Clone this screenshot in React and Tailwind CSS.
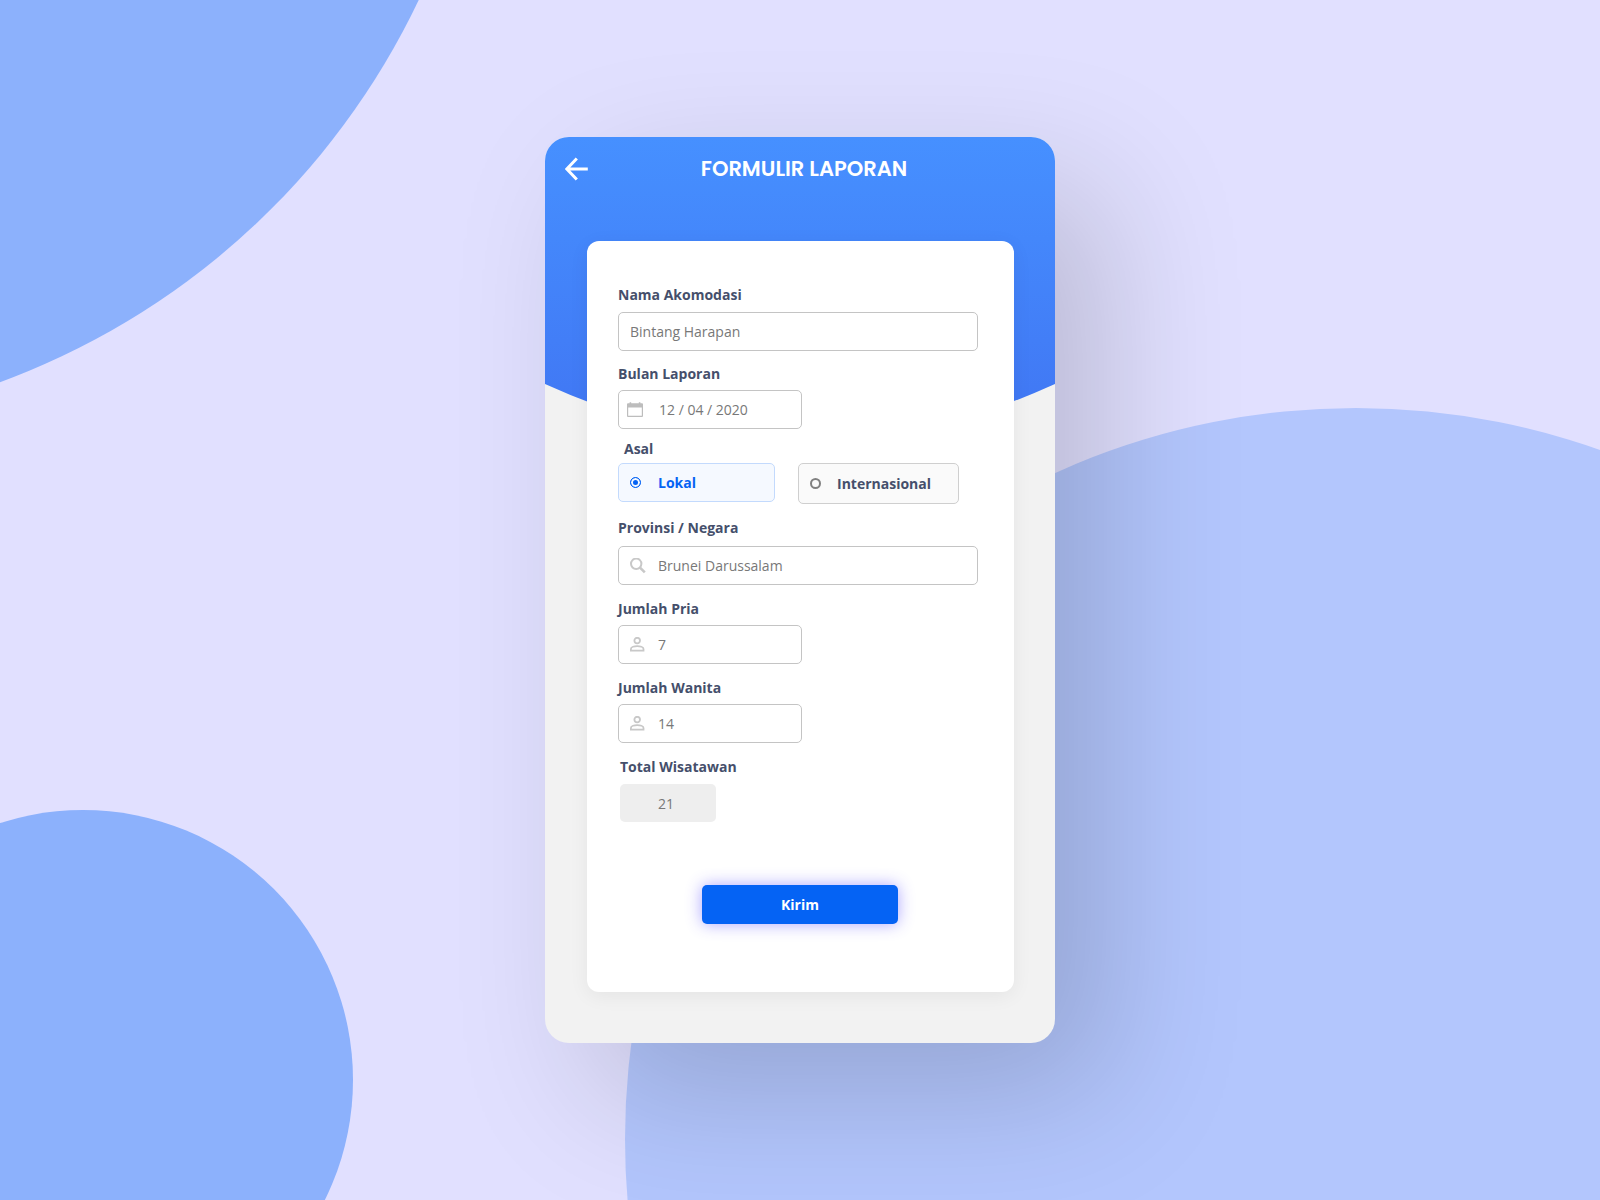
import React, { useState } from 'react'

const FIELD = 'h-[39px] rounded-[5px] border border-[#c4c4c4] flex items-center bg-white'
const INPUT = 'min-w-0 flex-1 bg-transparent text-sm leading-5 text-[#787878] outline-none'
const LABEL = 'block w-fit text-sm leading-5 font-bold text-[#454f6b]'

function Backdrop() {
  return (
    <svg
      className="absolute inset-0 h-full w-full"
      viewBox="0 0 1600 1200"
      preserveAspectRatio="xMidYMid slice"
      aria-hidden="true"
    >
      <circle cx="-258" cy="-321" r="749" fill="#8cb1fc" />
      <circle cx="83" cy="1080" r="270" fill="#8cb1fc" />
      <circle cx="1356" cy="1139" r="731" fill="#b3c6fd" />
    </svg>
  )
}

function HeaderShape() {
  return (
    <svg
      className="absolute inset-x-0 top-0 h-[302px] w-full"
      viewBox="0 0 510 302"
      preserveAspectRatio="none"
      aria-hidden="true"
    >
      <defs>
        <linearGradient id="header" x1="0" y1="0" x2="0" y2="1">
          <stop offset="0" stopColor="#4690ff" />
          <stop offset="1" stopColor="#4075f3" />
        </linearGradient>
      </defs>
      <path d="M0 0H510V247Q255 363 0 247Z" fill="url(#header)" />
    </svg>
  )
}

function BackIcon() {
  return (
    <svg className="h-6 w-6" viewBox="0 0 24 24" fill="none" stroke="#fff" strokeWidth="3">
      <path d="M11.8 1.5L1.8 12L11.8 22.5M1.8 12H22.8" />
    </svg>
  )
}

function CalendarIcon() {
  return (
    <svg className="h-4 w-4 shrink-0" viewBox="0 0 16 16" aria-hidden="true">
      <path
        d="M0 2.2Q0 1.2 1 1.2H2.6V0.2H4.2V1.2H11.8V0.2H13.4V1.2H15Q16 1.2 16 2.2V14Q16 15 15 15H1Q0 15 0 14ZM1.2 5.4V13.8H14.8V5.4Z"
        fillRule="evenodd"
        fill="#bdbdbd"
      />
    </svg>
  )
}

function SearchIcon() {
  return (
    <svg className="h-4 w-4 shrink-0" viewBox="0 0 16 16" fill="none" stroke="#c8c8c8" aria-hidden="true">
      <circle cx="6.2" cy="5.8" r="5.2" strokeWidth="2" />
      <path d="M10 9.6L14.8 14.4" strokeWidth="2.6" />
    </svg>
  )
}

function PersonIcon() {
  return (
    <svg className="h-4 w-4 shrink-0" viewBox="0 0 16 16" fill="none" stroke="#c8c8c8" strokeWidth="1.8" aria-hidden="true">
      <circle cx="7.2" cy="3.6" r="2.8" />
      <path d="M0.9 13.6V12C0.9 10.2 4.4 9.2 7.2 9.2S13.5 10.2 13.5 12V13.6Z" />
    </svg>
  )
}

function OriginOption({ value, label, checked, onChange, className }) {
  return (
    <label className={`flex items-center rounded-[5px] border pl-[11px] text-sm leading-5 font-bold ${className}`}>
      <input
        type="radio"
        name="asal"
        value={value}
        checked={checked}
        onChange={onChange}
        className={`h-[11px] w-[11px] shrink-0 appearance-none rounded-full ${
          checked
            ? 'border border-[#0563f4] bg-[#0563f4] shadow-[inset_0_0_0_2px_#f5f9ff]'
            : 'border-2 border-[#808080] bg-transparent'
        }`}
      />
      {label}
    </label>
  )
}

export default function App() {
  const [origin, setOrigin] = useState('lokal')
  const [men, setMen] = useState('7')
  const [women, setWomen] = useState('14')
  const total = Number(men) + Number(women)

  return (
    <div className="relative flex min-h-screen items-start justify-center overflow-hidden bg-[#e1e0ff] px-4 pt-[137px] pb-[157px] font-['Open_Sans',sans-serif]">
      <Backdrop />

      <main className="relative w-full max-w-[510px] rounded-3xl bg-[#f2f2f2] shadow-[50px_50px_140px_rgba(0,0,0,0.17)]">
        <div className="relative overflow-hidden rounded-3xl pb-[51px]">
          <HeaderShape />

          <header className="relative grid h-[104px] grid-cols-[24px_1fr_24px] items-start px-5 pt-4">
            <button type="button" aria-label="Kembali" className="mt-1 h-6 w-6">
              <BackIcon />
            </button>
            <h1 className="pl-2 text-center font-['Poppins','Lato',sans-serif] text-[21px] leading-8 font-semibold text-white">
              FORMULIR LAPORAN
            </h1>
          </header>

          <form
            className="relative mr-[41px] ml-[42px] rounded-xl bg-white pt-11 pr-9 pb-[68px] pl-[31px] shadow-[0_4px_20px_rgba(0,0,0,0.06)]"
            onSubmit={(e) => e.preventDefault()}
          >
            <label htmlFor="akomodasi" className={LABEL}>Nama Akomodasi</label>
            <div className={`${FIELD} mt-[7px] pl-[11px]`}>
              <input id="akomodasi" className={INPUT} defaultValue="Bintang Harapan" />
            </div>

            <label htmlFor="bulan" className={`${LABEL} mt-[13px]`}>Bulan Laporan</label>
            <div className={`${FIELD} mt-[6px] w-[184px] gap-4 pl-2`}>
              <CalendarIcon />
              <input id="bulan" className={INPUT} defaultValue="12 / 04 / 2020" />
            </div>

            <fieldset>
              <legend className={`${LABEL} ml-[6px] pt-[10px]`}>Asal</legend>
              <div className="mt-1 flex items-start gap-[23px]">
                <OriginOption
                  value="lokal"
                  label="Lokal"
                  checked={origin === 'lokal'}
                  onChange={() => setOrigin('lokal')}
                  className="h-[39px] w-[157px] gap-[17px] border-[#c3dafd] bg-[#f5f9ff] text-[#0563f4]"
                />
                <OriginOption
                  value="internasional"
                  label="Internasional"
                  checked={origin === 'internasional'}
                  onChange={() => setOrigin('internasional')}
                  className="h-[41px] w-[161px] gap-4 border-[#cfcfcf] bg-[#fafafa] text-[#454f6b]"
                />
              </div>
            </fieldset>

            <label htmlFor="provinsi" className={`${LABEL} mt-[14px]`}>Provinsi / Negara</label>
            <div className={`${FIELD} mt-2 gap-3 pl-[11px]`}>
              <SearchIcon />
              <input id="provinsi" className={INPUT} defaultValue="Brunei Darussalam" />
            </div>

            <label htmlFor="pria" className={`${LABEL} mt-[14px]`}>Jumlah Pria</label>
            <div className={`${FIELD} mt-[6px] w-[184px] gap-3 pl-[11px]`}>
              <PersonIcon />
              <input
                id="pria"
                inputMode="numeric"
                className={INPUT}
                value={men}
                onChange={(e) => setMen(e.target.value)}
              />
            </div>

            <label htmlFor="wanita" className={`${LABEL} mt-[14px]`}>Jumlah Wanita</label>
            <div className={`${FIELD} mt-[6px] w-[184px] gap-3 pl-[11px]`}>
              <PersonIcon />
              <input
                id="wanita"
                inputMode="numeric"
                className={INPUT}
                value={women}
                onChange={(e) => setWomen(e.target.value)}
              />
            </div>

            <label htmlFor="total" className={`${LABEL} mt-[14px] ml-[2px]`}>Total Wisatawan</label>
            <input
              id="total"
              readOnly
              value={total}
              className="mt-[7px] ml-[2px] block h-[38px] w-24 rounded-[5px] bg-[#eeeeee] pl-[38px] text-sm leading-5 text-[#787878] outline-none"
            />

            <button
              type="submit"
              className="mt-[63px] ml-21 block h-[39px] w-[196px] rounded-[5px] bg-[#0563f4] text-sm leading-5 font-bold text-white shadow-[0_0_16px_rgba(72,56,255,0.45)]"
            >
              Kirim
            </button>
          </form>
        </div>
      </main>
    </div>
  )
}
